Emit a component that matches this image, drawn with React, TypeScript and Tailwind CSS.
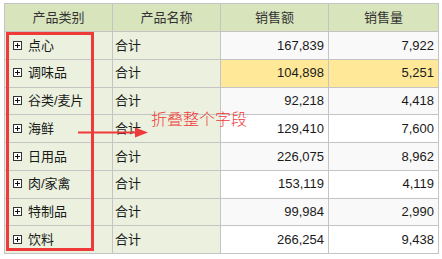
import { FC } from 'react';

interface Row {
  category: string;
  amount: string;
  qty: string;
}

const rows: Row[] = [
  { category: '点心', amount: '167,839', qty: '7,922' },
  { category: '调味品', amount: '104,898', qty: '5,251' },
  { category: '谷类/麦片', amount: '92,218', qty: '4,418' },
  { category: '海鲜', amount: '129,410', qty: '7,600' },
  { category: '日用品', amount: '226,075', qty: '8,962' },
  { category: '肉/家禽', amount: '153,119', qty: '4,119' },
  { category: '特制品', amount: '99,984', qty: '2,990' },
  { category: '饮料', amount: '266,254', qty: '9,438' },
];

const PlusBox: FC = () => (
  <span className="inline-flex w-[9px] h-[9px] border border-[#333] bg-white items-center justify-center mr-[6px] relative top-[-1px]">
    <svg width="7" height="7" viewBox="0 0 7 7">
      <path d="M1 3.5H6M3.5 1V6" stroke="#111" strokeWidth="1" />
    </svg>
  </span>
);

const numBg = (i: number) => {
  if (i === 1) return 'bg-[#ffe898]';
  return i % 2 === 0 ? 'bg-[#f9f9f9]' : 'bg-white';
};

const App: FC = () => {
  return (
    <div
      className="relative w-[442px] h-[259px] bg-white pl-[4px] pt-[3px] text-[13px] text-[#1a1a1a]"
      style={{ fontFamily: '"Liberation Sans", "Noto Sans CJK SC", sans-serif' }}
    >
      <table className="table-fixed border-collapse w-[434px]">
        <colgroup>
          <col className="w-[108px]" />
          <col className="w-[108px]" />
          <col className="w-[108px]" />
          <col className="w-[110px]" />
        </colgroup>
        <thead>
          <tr className="h-[28px] bg-[#d8e4bc] text-[#333]">
            <th className="border border-[#c4c4c4] font-normal text-center p-0">产品类别</th>
            <th className="border border-[#c4c4c4] font-normal text-center p-0">产品名称</th>
            <th className="border border-[#c4c4c4] font-normal text-center p-0">销售额</th>
            <th className="border border-[#c4c4c4] font-normal text-center p-0">销售量</th>
          </tr>
        </thead>
        <tbody>
          {rows.map((r, i) => (
            <tr key={r.category} className="h-[27.75px]">
              <td className="border border-[#c4c4c4] bg-[#ebf1de] pl-[8px] p-0 whitespace-nowrap">
                <PlusBox />
                {r.category}
              </td>
              <td className="border border-[#c4c4c4] bg-[#ebf1de] pl-[2px] p-0">合计</td>
              <td className={`border border-[#c4c4c4] ${numBg(i)} text-right pr-[4px] p-0`}>{r.amount}</td>
              <td className={`border border-[#c4c4c4] ${numBg(i)} text-right pr-[4px] p-0`}>{r.qty}</td>
            </tr>
          ))}
        </tbody>
      </table>

      {/* annotation: red box round the category column */}
      <div className="absolute left-[6px] top-[32px] w-[88px] h-[219px] border-[3px] border-[#ef3a3a] pointer-events-none" />

      {/* annotation: arrow + label */}
      <svg className="absolute left-[76px] top-[125px]" width="74" height="14" viewBox="0 0 74 14">
        <path d="M2 7.5H62" stroke="#ef3a3a" strokeWidth="2" />
        <path d="M59 2.5L72 7.5L59 12.5Z" fill="#ef3a3a" />
      </svg>
      <div
        className="absolute left-[151px] top-[108px] text-[16px] leading-[20px] text-[#f03a3a]"
        style={{ fontFamily: '"Noto Sans CJK SC", sans-serif', fontWeight: 300 }}
      >
        折叠整个字段
      </div>
    </div>
  );
};

export default App;
